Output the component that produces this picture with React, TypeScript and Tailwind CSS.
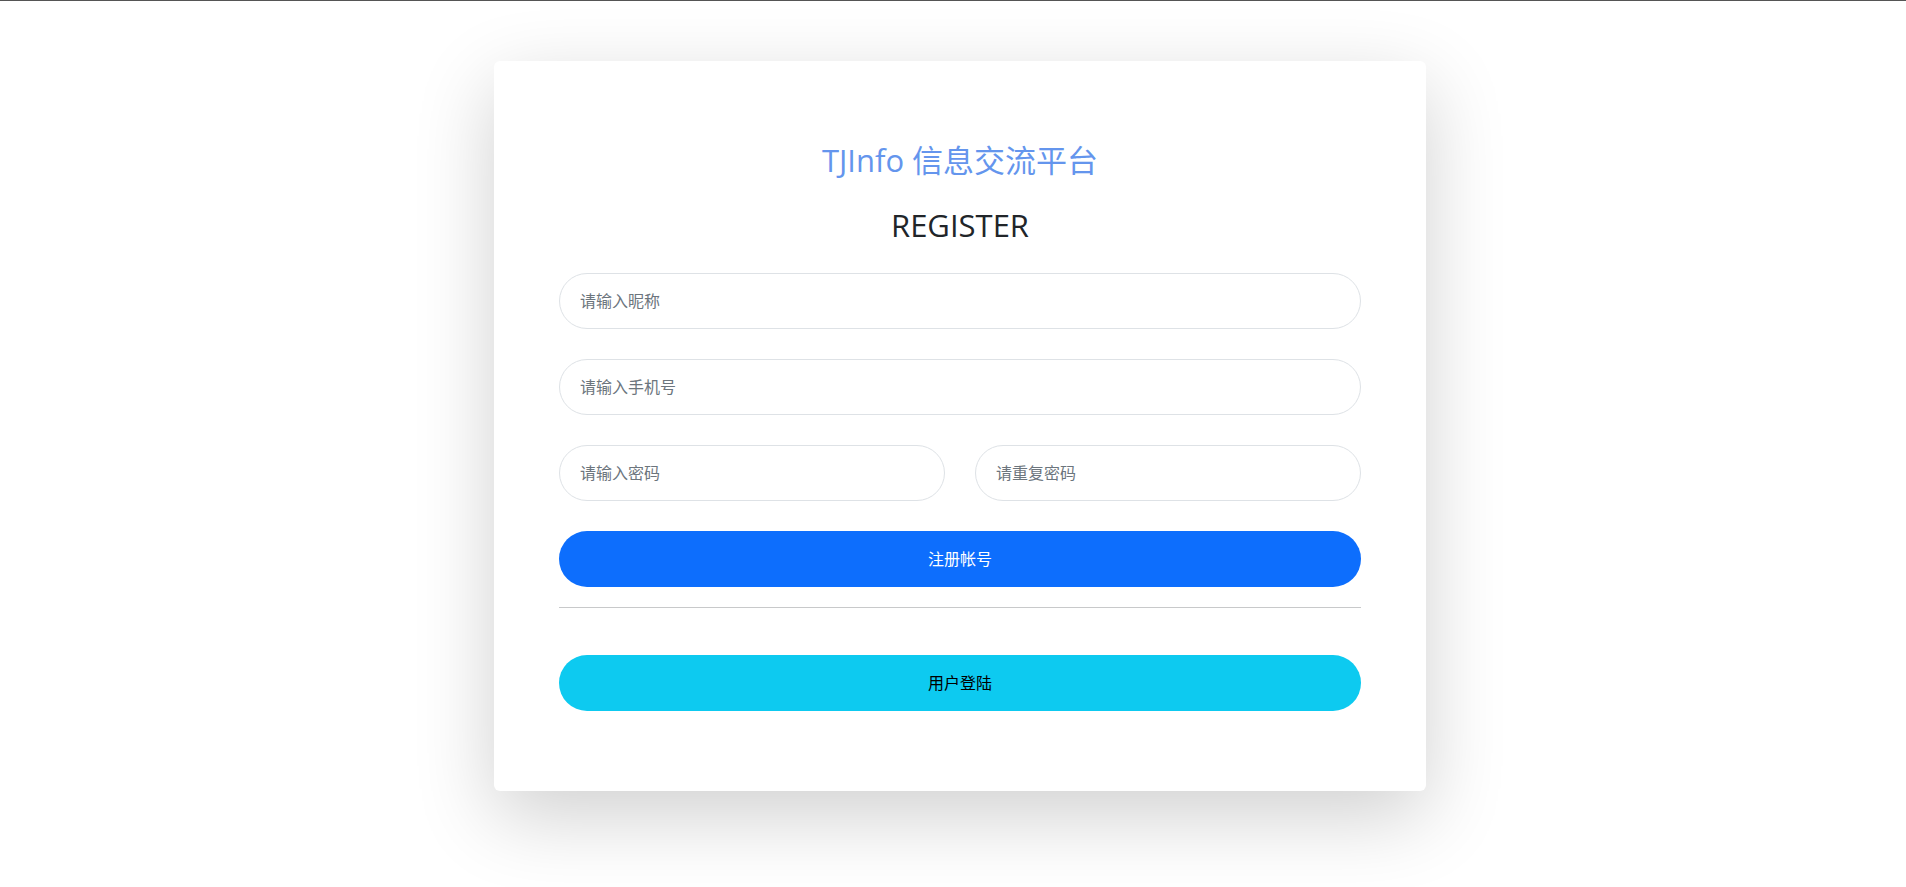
const inputCls =
  'w-full h-[56px] rounded-full border border-[#dee2e6] bg-white px-5 text-base text-[#212529] placeholder:text-[#6c757d] outline-none';

const RegisterCard = () => {
  return (
    <div className="w-[932px] rounded-md bg-white px-[65px] pt-[81px] pb-[80px] shadow-[0_25px_80px_rgba(0,0,0,0.19)]">
      <h2 className="text-center text-[31px] leading-[36px] font-normal text-[#6495ed]">TJInfo 信息交流平台</h2>
      <h3 className="mt-[28px] text-center text-[31px] leading-[38px] font-normal text-[#212529]">REGISTER</h3>

      <form className="mt-[29px] flex flex-col gap-[30px]" onSubmit={(e) => e.preventDefault()}>
        <input className={inputCls} placeholder="请输入昵称" />
        <input className={inputCls} placeholder="请输入手机号" />
        <div className="grid grid-cols-2 gap-[30px]">
          <input type="password" className={inputCls} placeholder="请输入密码" />
          <input type="password" className={inputCls} placeholder="请重复密码" />
        </div>
        <button className="h-[56px] w-full rounded-full bg-[#0d6efd] text-base text-white">注册帐号</button>
      </form>

      <hr className="mt-[20px] border-0 border-t border-[#c8c9ca]" />

      <button className="mt-[47px] h-[56px] w-full rounded-full bg-[#0dcaf0] text-base text-black">用户登陆</button>
    </div>
  );
};

const App = () => {
  return (
    <div className="min-h-screen bg-white font-['Open_Sans','Noto_Sans_CJK_SC',sans-serif]">
      <div className="h-px bg-[#555]" />
      <div className="flex justify-center pl-[14px] pt-[60px] pb-[96px]">
        <RegisterCard />
      </div>
    </div>
  );
};

export default App;
